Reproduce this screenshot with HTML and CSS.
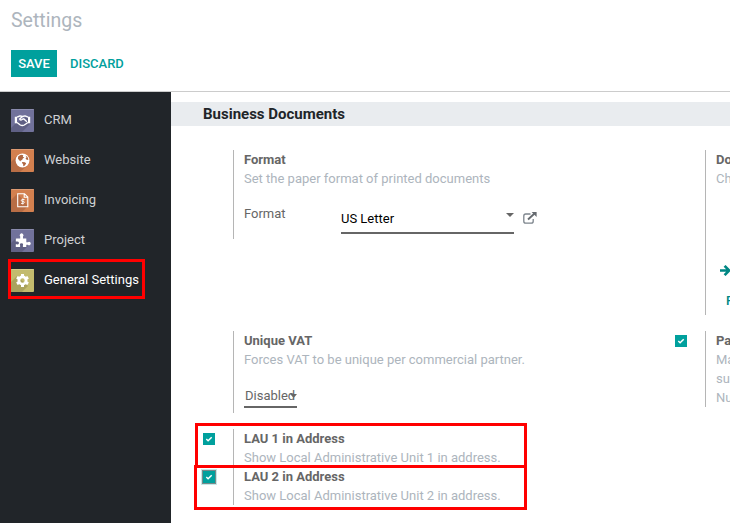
FILE: index.html
```html
<!DOCTYPE html>
<html lang="en">
<head>
<meta charset="utf-8">
<title>Settings</title>
<link rel="stylesheet" href="styles.css">
</head>
<body>
<header class="control-panel">
  <h1 class="title">Settings</h1>
  <div class="buttons">
    <button class="btn btn-primary">SAVE</button>
    <button class="btn btn-link">DISCARD</button>
  </div>
</header>
<div class="body">
  <nav class="tabs">
    <a class="tab">
      <svg class="app" viewBox="0 0 23 23"><rect width="23" height="23" fill="#71729b"/><path d="M4 15L15 8l4 1v6l-8 8H0v-4z" fill="#5f6084"/><path d="M0 .5h23" stroke="#8a8bad"/><path d="M3.800 7.800h2.200v6.400H3.800zM17 7.800h2.200v6.400H17z" fill="#fff"/><path d="M6 8.200l3-1.300 2.500.6L14 6.900l3 1.300M11.500 7.500L8.700 10c.4 1.300 1.900 1.300 3 .1l1-.3 3.200 3M6 13.500l3.300 2.500c1.300.8 2.700.7 4 0L17 13.500" fill="none" stroke="#fff" stroke-width="1.400" stroke-linejoin="round"/></svg>
      <span>CRM</span>
    </a>
    <a class="tab">
      <svg class="app" viewBox="0 0 23 23"><rect width="23" height="23" fill="#d3804f"/><path d="M6 7L0 13v10h9l8-7z" fill="#b86d45"/><path d="M0 .5h23" stroke="#dd9a72"/><circle cx="11.500" cy="11.500" r="6.900" fill="#fff"/><path d="M7.300 7.200l2.700-1.500 2.300.5-.5 1.500 1.500.8-1.500 1-.7 1.600-1.500.3.300 1.200-1.800-1.300-1.200-1.800zM11.300 13l2.700.3 1.200 1.100-1.700 2.400-1.200.5-.2-2.200-1.200-1zM14.500 6.500l2 1.500 1 2.500-1.500.4-1.500-1.400 1-1z" fill="#af6640"/></svg>
      <span>Website</span>
    </a>
    <a class="tab">
      <svg class="app" viewBox="0 0 23 23"><rect width="23" height="23" fill="#d3804f"/><path d="M6.500 4.500L0 11v12h11l6-6z" fill="#b86d45"/><path d="M0 .5h23" stroke="#dd9a72"/><path d="M6.700 4.700h6.800l3.300 3.300v9.800H6.700zM13.200 5v3.300h3.300" fill="none" stroke="#fff" stroke-width="1.100"/><path d="M13.500 10.500h-2.300c-1.200 0-1.200 1.900 0 1.900h1.100c1.300 0 1.300 2 0 2H10M11.800 9.500v6" fill="none" stroke="#fff" stroke-width=".9"/></svg>
      <span>Invoicing</span>
    </a>
    <a class="tab">
      <svg class="app" viewBox="0 0 23 23"><rect width="23" height="23" fill="#71729b"/><path d="M5 9L0 14v9h11l6-6z" fill="#5f6084"/><path d="M0 .5h23" stroke="#8a8bad"/><path d="M4.800 9.500h4.400V7.600a1.900 1.900 0 1 1 2.800 0v1.900h3.300v3.700h1.600a1.700 1.700 0 1 1 0 2.500h-1.600V18h-3.400v-1.700a1.500 1.500 0 1 0-2.800 0V18H4.800v-2.700h1a1.500 1.500 0 1 0 0-2.700h-1z" fill="#fff"/></svg>
      <span>Project</span>
    </a>
    <a class="tab active">
      <svg class="app" viewBox="0 0 23 23"><rect width="23" height="23" fill="#c3bb6d"/><path d="M6 7L0 13v10h11l6-6z" fill="#aaa35d"/><path d="M0 .5h23" stroke="#d2cb8a"/><circle cx="11.500" cy="11.500" r="3.600" fill="none" stroke="#fff" stroke-width="2.800"/><path d="M11.500 5v2.200M11.500 15.800V18M5.900 8.250l1.900 1.100M15.200 13.650l1.900 1.100M5.900 14.750l1.900-1.100M15.200 9.350l1.900-1.100" stroke="#fff" stroke-width="3"/></svg>
      <span>General Settings</span>
    </a>
  </nav>
  <main class="settings">
    <h2 class="section">Business Documents</h2>
    <div class="grid">
      <div class="box row-format">
        <div class="check"></div>
        <div class="pane pane-format">
          <b>Format</b>
          <p>Set the paper format of printed documents</p>
          <div class="field">
            <label>Format</label>
            <div class="select">US Letter<i class="caret"></i></div>
            <svg class="external" viewBox="0 0 14 12"><path d="M7.500 2H2.800C1.600 2 .8 2.800.8 4v5.200c0 1.200.8 2 2 2h5.400c1.200 0 2-.8 2-2V7" fill="none" stroke="#7c848c" stroke-width="1.300"/><path d="M5 7.500L11.500 1.500" stroke="#666b70" stroke-width="1.900"/><path d="M8.600 0h5v5z" fill="#666b70"/></svg>
          </div>
        </div>
      </div>
      <div class="box row-format">
        <div class="check"></div>
        <div class="pane pane-layout">
          <b>Document Layout</b>
          <p>Choose the layout of your documents</p>
          <div class="links">
            <svg class="arrow" viewBox="0 0 11 11"><path d="M0 5.500h9M4.600.9l4.600 4.600-4.600 4.600" fill="none" stroke="#008784" stroke-width="2.700"/></svg>
            <span>Edit Layout</span>
          </div>
          <div class="preview">Preview Document</div>
        </div>
      </div>
      <div class="box row-vat">
        <div class="check"></div>
        <div class="pane pane-vat">
          <b>Unique VAT</b>
          <p>Forces VAT to be unique per commercial partner.</p>
          <div class="select small">Disabled<i class="caret"></i></div>
        </div>
      </div>
      <div class="box row-vat">
        <div class="check"><span class="checkbox"><svg viewBox="0 0 12 12"><path d="M3.300 6l1.800 1.700 3.600-3.500" fill="none" stroke="#fff" stroke-width="1.500"/></svg></span></div>
        <div class="pane pane-partner">
          <b>Partner Numbers</b>
          <p>Make it required</p>
          <p>supplied Partner</p>
          <p>Numbers</p>
        </div>
      </div>
      <div class="box">
        <div class="check"><span class="checkbox"><svg viewBox="0 0 12 12"><path d="M3.300 6l1.800 1.700 3.600-3.500" fill="none" stroke="#fff" stroke-width="1.500"/></svg></span></div>
        <div class="pane">
          <b>LAU 1 in Address</b>
          <p>Show Local Administrative Unit 1 in address.</p>
        </div>
      </div>
      <div class="box new-row">
        <div class="check"><span class="checkbox focus"><svg viewBox="0 0 12 12"><path d="M3.300 6l1.800 1.700 3.600-3.500" fill="none" stroke="#fff" stroke-width="1.500"/></svg></span></div>
        <div class="pane">
          <b>LAU 2 in Address</b>
          <p>Show Local Administrative Unit 2 in address.</p>
        </div>
      </div>
    </div>
  </main>
</div>
<div class="mark mark-general"></div>
<div class="mark mark-lau1"></div>
<div class="mark mark-lau2"></div>
</body>
</html>
```

FILE: styles.css
```css
* { box-sizing: border-box; }
html, body { height: 100%; }
body {
  margin: 0;
  overflow: hidden;
  background: #fff;
  color: #666;
  font: 13px/19px Roboto, sans-serif;
  display: flex;
  flex-direction: column;
}
.control-panel {
  flex: none;
  height: 92px;
  padding: 6px 11px 0;
  border-bottom: 1px solid #ccc;
}
.title {
  margin: 0;
  height: 30px;
  font-size: 19.5px;
  line-height: 30px;
  font-weight: 400;
  color: #adb5bd;
}
.buttons { display: flex; margin-top: 14px; }
.btn {
  height: 27px;
  padding: 0;
  border: 0;
  font: 500 13px/27px Roboto, sans-serif;
}
.btn-primary { width: 46px; background: #00a09d; color: #fff; }
.btn-link { margin-left: 13px; background: none; color: #00a09d; }
.body { flex: 1; display: flex; min-height: 0; }
.tabs { flex: none; width: 171px; padding-top: 8px; background: #212529; }
.tab {
  display: flex;
  align-items: center;
  height: 40px;
  padding-left: 11px;
  color: #ced0d2;
  white-space: nowrap;
}
.tab.active { color: #fff; }
.tab span { margin: -2px 0 0 10px; }
.app { width: 23px; height: 23px; border-radius: 1px; }
.settings { flex: 1; min-width: 0; padding-top: 10px; overflow: hidden; }
.section {
  margin: 0;
  height: 24px;
  padding-left: 32px;
  background: #e9ecef;
  color: #212529;
  font-size: 15px;
  line-height: 24px;
  font-weight: 700;
}
.grid {
  display: grid;
  grid-template-columns: 472px 472px;
  margin: 24px 0 0 32px;
}
.box { display: flex; align-items: flex-start; }
.new-row { grid-column: 1; }
.row-format { height: 181px; }
.row-vat { height: 98px; }
.check { width: 30px; padding-top: 4px; }
.checkbox { display: block; width: 12px; height: 12px; background: #00a09d; }
.checkbox svg { display: block; width: 12px; height: 12px; }
.checkbox.focus { outline: 1px solid #79898a; box-shadow: 0 0 0 2px #c5e9e8; }
.pane {
  height: 38px;
  padding-left: 10px;
  border-left: 1px solid #b5b5b5;
  white-space: nowrap;
}
.pane b { display: block; font-weight: 700; }
.pane p { margin: 0; color: #adb5bd; }
.pane-format { height: 89px; }
.pane-layout { height: 165px; }
.pane-vat { height: 82px; }
.pane-partner { height: 76px; }
.field { display: flex; margin-top: 16px; }
.field label { width: 97px; }
.select {
  display: flex;
  justify-content: space-between;
  width: 173px;
  height: 30px;
  padding-top: 5px;
  border-bottom: 2px solid #666;
  color: #000;
}
.caret {
  width: 8px;
  height: 4px;
  margin-top: 4px;
  background: #666;
  clip-path: polygon(0 0, 100% 0, 50% 100%);
}
.small {
  width: 53px;
  height: 24px;
  margin-top: 15px;
  padding: 2px 0 0 1px;
  color: #666;
}
.small .caret { margin: 8px 0 0 -5px; }
.external { width: 14px; height: 12px; margin: 8px 0 0 9px; }
.links, .preview { color: #008784; font-weight: 500; }
.links { display: flex; align-items: center; margin-top: 73px; padding-left: 4px; gap: 5px; }
.arrow { width: 11px; height: 11px; }
.preview { margin-top: 11px; padding-left: 10px; }
.mark { position: absolute; border: 3px solid #f00; }
.mark-general { left: 8px; top: 259px; width: 137px; height: 40px; }
.mark-lau1 { left: 195px; top: 423px; width: 332px; height: 45px; }
.mark-lau2 { left: 194px; top: 465px; width: 333px; height: 45px; }
```
